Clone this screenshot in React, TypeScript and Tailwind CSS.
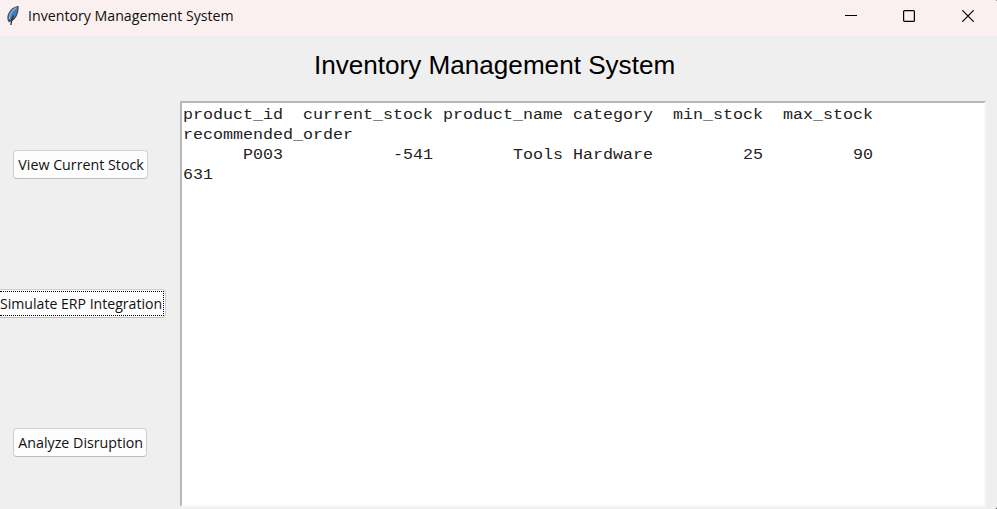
import React from "react";

const report = [
  "product_id  current_stock product_name category  min_stock  max_stock",
  "recommended_order",
  "      P003           -541        Tools Hardware         25         90",
  "631",
].join("\n");

function Feather() {
  return (
    <svg className="ml-[6px] h-5 w-[14px] shrink-0" viewBox="0 0 14 20" fill="none">
      <path d="M12 .5C8.500 1 4.500 4 2.500 8.500c-1 2.700-.7 5 .5 7C7 14.500 10.300 11 11.400 6.500c.5-2 1-4 .6-6Z" fill="#3f7fc4" stroke="#45464c" strokeWidth="1.100" />
      <path d="M10.500 1.500C6.500 4 3.500 8.500 3.300 13" stroke="#a5b4c0" strokeWidth="1.200" />
      <path d="M7.500 9.500C5.800 12.500 5 15 4.900 19" stroke="#262a32" strokeWidth="1.300" />
    </svg>
  );
}

function TitleBar() {
  return (
    <header className="flex h-[36px] shrink-0 items-start bg-[#f9f0ef]">
      <div className="flex h-8 items-center">
        <Feather />
        <span className="mb-0.5 ml-2 origin-left whitespace-pre text-[15px] leading-5 text-[#111] scale-x-[0.945]">Inventory Management System</span>
      </div>
      <div className="ml-auto flex h-8 items-center pr-[23px] text-black">
        <svg className="mr-[46px] size-3" viewBox="0 0 12 12" fill="none"><path d="M0 5.500h12" stroke="currentColor" /></svg>
        <svg className="mr-[47px] size-3" viewBox="0 0 12 12" fill="none"><rect x=".6" y=".6" width="10.800" height="10.800" rx="1" stroke="currentColor" strokeWidth="1.200" /></svg>
        <svg className="size-3" viewBox="0 0 12 12" fill="none"><path d="m.3.300 11.400 11.400M11.700.300.300 11.700" stroke="currentColor" strokeWidth="1.200" /></svg>
      </div>
    </header>
  );
}

export default function App() {
  const button = "flex h-[29px] items-center justify-center whitespace-nowrap rounded-[4px] border border-[#d0d0d0] border-b-[#bcbcbc] bg-[#fdfdfd] text-[15px] leading-5 text-[#111]";
  return (
    <div className="bg-[#333]">
      <div className="flex h-[509px] w-[997px] flex-col overflow-hidden rounded-r-[2px] bg-[#efefef] font-['Open_Sans',sans-serif]">
        <TitleBar />
        <h1 className="h-[65px] shrink-0 whitespace-nowrap pt-[13px] pl-[314px] font-['Liberation_Sans',Arial,sans-serif] text-[26.100px] leading-8 text-black">Inventory Management System</h1>
        <main className="flex min-h-0 flex-1">
          <aside className="flex w-[180px] shrink-0 flex-col items-start pt-[49px]">
            <button className={`${button} ml-[13px] w-[135px]`}><span className="mb-0.5 ml-px scale-x-[0.95]">View Current Stock</span></button>
            <div className="mt-[110px] flex h-[29px] w-[166px] rounded-r-[4px] border border-l-0 border-[#d0d0d0] border-b-[#bcbcbc] bg-[#fdfdfd] py-px pr-px">
              <button className="flex w-full items-center border border-l-0 border-dotted border-black text-[15px] leading-5 text-[#111]">
                <span className="mb-0.5 origin-left whitespace-nowrap scale-x-[0.94]">Simulate ERP Integration</span>
              </button>
            </div>
            <button className={`${button} mt-[110px] ml-[13px] w-[134px]`}><span className="mb-0.5 ml-px scale-x-[0.95]">Analyze Disruption</span></button>
          </aside>
          <section className="h-[406px] w-[806px] border-2 border-t-[#b8b8b8] border-r-[#f8f8f8] border-b-[#f8f8f8] border-l-[#b8b8b8] bg-white pt-[2px] pl-px">
            <pre className="origin-left font-['Liberation_Mono','Courier_New',monospace] text-[15.500px] leading-5 text-[#222] scale-x-[1.075]">{report}</pre>
          </section>
        </main>
      </div>
    </div>
  );
}
